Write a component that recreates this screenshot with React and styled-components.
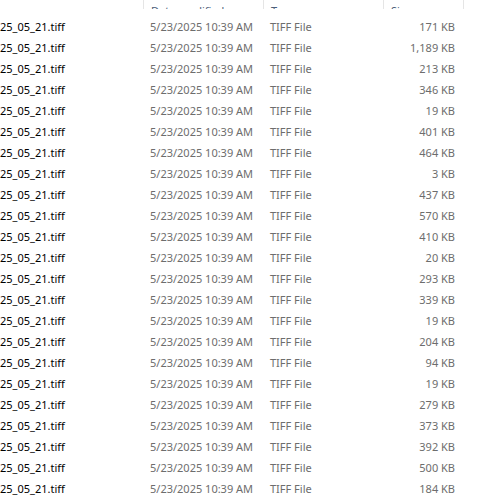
import React from 'react';
import styled, { createGlobalStyle } from 'styled-components';

const sizes = [
  '171', '1,189', '213', '346', '19', '401', '464', '3', '437', '570', '410', '20',
  '293', '339', '19', '204', '94', '19', '279', '373', '392', '500', '184',
];

const files = sizes.map((s, i) => ({
  id: i,
  name: '25_05_21.tiff',
  date: '5/23/2025 10:39 AM',
  type: 'TIFF File',
  size: `${s} KB`,
}));

const GlobalStyle = createGlobalStyle`
  html, body { margin: 0; padding: 0; background: #ffffff; }
  body {
    font-family: "Segoe UI", "Noto Sans", "Open Sans", sans-serif;
    font-size: 11px;
    overflow: hidden;
  }
`;

const Pane = styled.div`
  width: 483px;
  height: 500px;
  overflow: hidden;
  background: #fff;
`;

const HeaderBar = styled.div`
  display: grid;
  grid-template-columns: 143px 120px 120px 80px 1fr;
  height: 9px;
  overflow: hidden;
`;

const HeaderCell = styled.div`
  height: 100%;
  display: flex;
  align-items: flex-end;
  padding: 0 7px;
  color: #4c607a;
  line-height: 21px;
  border-left: ${({ $sep }) => ($sep ? '1px solid #e5e5e5' : 'none')};
  white-space: nowrap;
`;

const Rows = styled.div`
  display: flex;
  flex-direction: column;
  padding-top: 7px;
`;

const Row = styled.div`
  display: grid;
  grid-template-columns: 143px 120px 120px 80px 1fr;
  height: 21px;
  align-items: center;
  white-space: nowrap;
`;

const Cell = styled.div`
  padding: 0 ${({ $pad }) => $pad || '7px'};
  color: ${({ $primary }) => ($primary ? '#000000' : '#6d6d6d')};
  text-align: ${({ $right }) => ($right ? 'right' : 'left')};
  overflow: hidden;
`;

const NameCell = styled(Cell)`
  padding-left: 0;
`;

export default function App() {
  return (
    <Pane>
      <GlobalStyle />
      <HeaderBar>
        <HeaderCell />
        <HeaderCell $sep>Date modified</HeaderCell>
        <HeaderCell $sep>Type</HeaderCell>
        <HeaderCell $sep>Size</HeaderCell>
        <HeaderCell $sep />
      </HeaderBar>
      <Rows>
        {files.map((f) => (
          <Row key={f.id}>
            <NameCell $primary>{f.name}</NameCell>
            <Cell>{f.date}</Cell>
            <Cell>{f.type}</Cell>
            <Cell $right $pad="8px">{f.size}</Cell>
            <Cell />
          </Row>
        ))}
      </Rows>
    </Pane>
  );
}
